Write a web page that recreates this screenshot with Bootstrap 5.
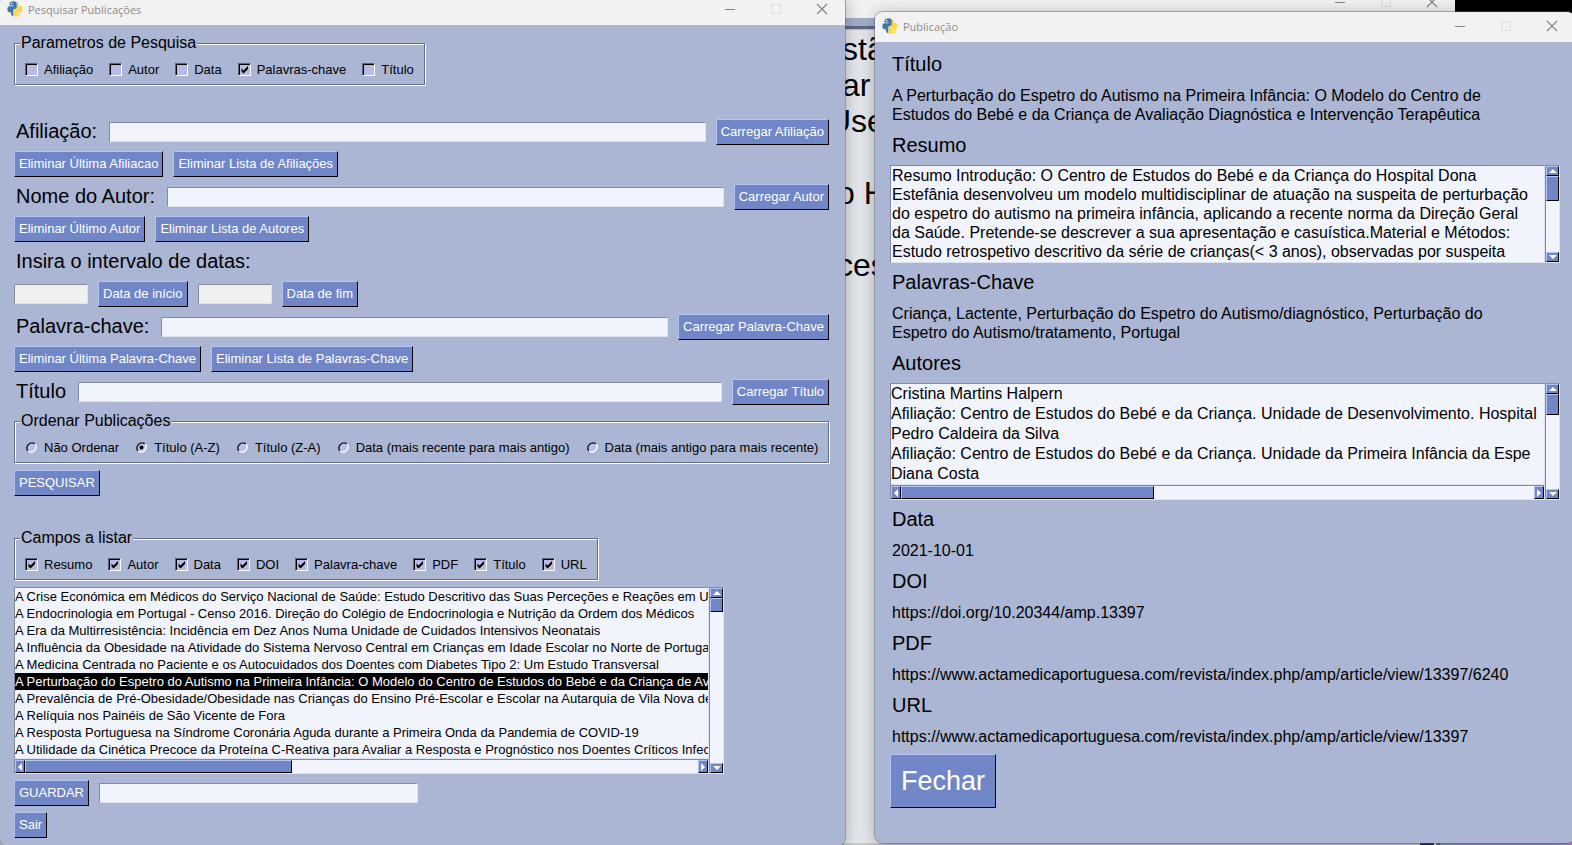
<!DOCTYPE html>
<html lang="pt">
<head>
<meta charset="utf-8">
<meta name="viewport" content="width=device-width, initial-scale=1">
<title>Pesquisar Publicações</title>
<link href="https://cdn.jsdelivr.net/npm/bootstrap@5.3.0/dist/css/bootstrap.min.css" rel="stylesheet">
<style>
:root{--face:#aab6d3;--field:#f1f4fc;--key:#7186c7;--lo:#858b9b;--hi:#dde2ee}
body{font-family:"Liberation Sans",Arial,sans-serif;font-size:13px;line-height:17px;color:#000}
.desktop{min-height:100vh;background:linear-gradient(#000 0 50%,#b08acb 100%)}
/* windows */
.win{position:absolute;background:var(--face);border-radius:8px;overflow:hidden;box-shadow:0 0 0 1px rgba(90,95,110,.45),0 3px 18px rgba(0,0,0,.32)}
.win-main{left:0;top:-5px;width:845px;z-index:2}
.win-pub{left:875px;right:-3px;top:12px;z-index:3}
.win-back{left:0;top:-12px;bottom:-8px;width:1455px;z-index:1;background:#e6eaee;box-shadow:none}
.bar{height:30px;background:#f2f2f2;font-family:"Open Sans","Noto Sans",sans-serif;font-size:11px;color:#8c8c8c;padding:0 0 2px 7px}
.bar svg{display:block}
.bar-title{margin-left:5px}
.ctl{width:46px;height:28px;border:0;background:none;padding:0;color:#858585;display:flex;align-items:center;justify-content:center}
.ctl:disabled{color:#dcdcdc}
.main-body{padding:8px 16px 8px 14px;gap:6px}
.pub-body{padding:9px 15px 35px 15px;gap:6px}
.spacer{height:20px}
.gap-10{gap:10px}
/* text */
.cap{font-size:20px;line-height:27px;font-weight:400;margin:0;padding:0 2px;white-space:nowrap}
.val{font-size:16px;line-height:19px;margin:0;padding:2px}
/* controls */
.key{font-size:13px;line-height:16px;padding:4px;color:#fff;background:var(--key);border:1px solid;border-color:#b3c4f6 #000 #000 #b3c4f6;border-radius:0;white-space:nowrap}
.key:hover{color:#fff;background:#7d91cf}
.key-lg{font-size:27px;line-height:32px;padding:10px}
.entry{height:20px;padding:0 2px;border:1px solid;border-color:var(--lo) var(--hi) var(--hi) var(--lo);background:var(--field);border-radius:0;min-width:0}
.entry-date{width:74px;background:#f0f0f0}
.entry-file{width:319px}
/* etched frame */
.etched{border:1px solid #5f6f89;box-shadow:1px 1px 0 #fff,inset 1px 1px 0 #fff;padding:7px 5px 5px;margin:0 1px 1px 0;width:fit-content}
.etched legend{font-size:16px;line-height:20px;padding:0 1px;margin:0;background:var(--face)}
.opts{gap:16px;padding:0 5px;line-height:19px;white-space:nowrap}
.opts label{display:flex;align-items:center;gap:6px}
.tick,.dot{appearance:none;width:13px;height:13px;margin:0;flex:none}
.tick{border:1px solid;border-color:#5a6378 #fff #fff #5a6378;box-shadow:inset 1px 1px 0 #000;background:#b9bbe6}
.tick:checked{background:#b9bbe6 url("data:image/svg+xml,%3Csvg xmlns='http://www.w3.org/2000/svg' viewBox='0 0 11 11'%3E%3Cpath d='M2.5 4.5v3l2 2 4.500-4.500v-3l-4.500 4.500z'/%3E%3C/svg%3E") center/11px}
.dot{background:url("data:image/svg+xml,%3Csvg xmlns='http://www.w3.org/2000/svg' viewBox='0 0 13 13' fill='none' stroke-width='1.3'%3E%3Ccircle cx='6.500' cy='6.500' r='5' fill='%23bcbfe6'/%3E%3Cpath d='M10 3a5 5 0 0 0-7 7' stroke='%23101020'/%3E%3Cpath d='M10 3a5 5 0 0 1-7 7' stroke='%23fff'/%3E%3C/svg%3E")}
.dot:checked{background-image:url("data:image/svg+xml,%3Csvg xmlns='http://www.w3.org/2000/svg' viewBox='0 0 13 13' fill='none' stroke-width='1.3'%3E%3Ccircle cx='6.500' cy='6.500' r='5' fill='%23bcbfe6'/%3E%3Cpath d='M10 3a5 5 0 0 0-7 7' stroke='%23101020'/%3E%3Cpath d='M10 3a5 5 0 0 1-7 7' stroke='%23fff'/%3E%3Ccircle cx='6.500' cy='6.500' r='2' fill='%23000'/%3E%3C/svg%3E")}
/* list boxes and their scroll bars */
.box-main{width:710px}
.pane{border:1px solid;border-color:var(--lo) var(--hi) var(--hi) var(--lo);background:var(--field);overflow:hidden;white-space:nowrap;border-radius:0}
.pane li{height:17px}
.pane-lg li{font-size:16px;line-height:20px;height:20px}
.pane li[aria-selected=true]{background:#000;color:#fff}
.abstract{display:block;resize:none;font-size:16px;line-height:19px;padding:0 1px 1px;height:98px;color:#000}
.sv,.sh{display:flex;background:var(--field);border:1px solid;border-color:var(--lo) var(--hi) var(--hi) var(--lo);flex:none}
.sv{flex-direction:column;width:15px}
.sh{height:15px}
.sv button,.sh button,.thumb{background:var(--key);border:1px solid;border-color:#b3c4f6 #000 #000 #b3c4f6;padding:0;flex:none;display:flex;align-items:center;justify-content:center}
.sv button{height:10px}
.sh button{width:10px}
.ghost{font-size:32px;line-height:36px;padding-top:1px}
.ghost-head{height:8px;background:#a4afcd}
.ghost-rule{height:4px;background:#5d6b80;border-bottom:1px solid #b9c0ca}
.ghost div{padding-left:837px;height:36px}
.ghost .in-a{padding-left:842px}
.ghost .in-b{padding-left:828px}
.ghost-foot{position:absolute;left:0;right:0;bottom:0;height:10px;background:linear-gradient(90deg,#c9cbcd 0 1420px,#1e2a49 1420px 1434px,#fff 1434px 1436px,#5d6b80 1436px 1440px,#8d9abb 1440px)}
</style>
</head>
<body>
<svg width="0" height="0" class="position-absolute" aria-hidden="true">
<symbol id="py" viewBox="0 0 16 16"><path fill="#3f78a8" d="M6.500.3C4 .3 2.600 1.200 2.600 2.800v1.800h4v.6H2.400C1 5.200.4 6.600.4 8.200s.7 3 2 3H3.800c0 2 .6 3.600 2.600 4.300V10c0-1.400.8-2.200 2-2.200.9 0 1.400-.8 1.400-1.900V2.800C9.800 1.100 8.600.3 6.500.3z"/><path fill="#fbd84b" d="M9.600 15.800c2.500 0 3.800-1 3.800-2.500v-1.700h-4V11h4.300c1.300 0 1.900-1.400 1.900-3s-.7-3-1.900-3h-1.500c0-2-.6-3.600-2.200-4.200V6c0 1.400-.8 2.300-2 2.300-1 0-1.600.8-1.600 2v3c0 1.700 1.200 2.500 3.200 2.500z"/><circle cx="4.700" cy="2.600" r=".8" fill="#fff"/><circle cx="11.400" cy="13.500" r=".8" fill="#fff"/></symbol>
<symbol id="min" viewBox="0 0 12 12"><path d="M1 6.500h10" stroke="currentColor"/></symbol>
<symbol id="max" viewBox="0 0 12 12"><path d="M1.500 1.500h9v9h-9z" fill="none" stroke="currentColor"/></symbol>
<symbol id="cls" viewBox="0 0 12 12"><path d="M1 1l10 10M11 1L1 11" stroke="currentColor" stroke-width="1.200"/></symbol>
<symbol id="up" viewBox="0 0 8 4"><path fill="#fff" d="M0 4l4-4 4 4z"/></symbol>
<symbol id="dn" viewBox="0 0 8 4"><path fill="#fff" d="M0 0l4 4 4-4z"/></symbol>
<symbol id="lt" viewBox="0 0 4 8"><path fill="#fff" d="M4 0L0 4l4 4z"/></symbol>
<symbol id="rt" viewBox="0 0 4 8"><path fill="#fff" d="M0 0l4 4-4 4z"/></symbol>
</svg>
<div class="desktop position-relative overflow-hidden">

<section class="win win-back" aria-hidden="true">
  <div class="bar d-flex justify-content-end">
    <button class="ctl" tabindex="-1"><svg width="12" height="12"><use href="#min"/></svg></button>
    <button class="ctl" disabled><svg width="12" height="12"><use href="#max"/></svg></button>
    <button class="ctl" tabindex="-1"><svg width="12" height="12"><use href="#cls"/></svg></button>
  </div>
  <div class="ghost-head"></div><div class="ghost-rule"></div>
  <div class="ghost"><div class="in-a">stã</div><div class="in-a">ar</div><div class="in-b">Use</div><div></div><div>o H</div><div></div><div>ces</div></div>
  <div class="ghost-foot"></div>
</section>

<main class="win win-main">
  <header class="bar d-flex align-items-center">
    <svg width="16" height="16"><use href="#py"/></svg><span class="bar-title flex-grow-1">Pesquisar Publicações</span>
    <button class="ctl" aria-label="Minimizar"><svg width="12" height="12"><use href="#min"/></svg></button>
    <button class="ctl" aria-label="Maximizar" disabled><svg width="12" height="12"><use href="#max"/></svg></button>
    <button class="ctl" aria-label="Fechar janela"><svg width="12" height="12"><use href="#cls"/></svg></button>
  </header>
  <form class="main-body d-flex flex-column" onsubmit="return false">
    <fieldset class="etched">
      <legend class="float-none w-auto">Parametros de Pesquisa</legend>
      <div class="opts d-flex">
        <label><input class="tick" type="checkbox">Afiliação</label>
        <label><input class="tick" type="checkbox">Autor</label>
        <label><input class="tick" type="checkbox">Data</label>
        <label><input class="tick" type="checkbox" checked>Palavras-chave</label>
        <label><input class="tick" type="checkbox">Título</label>
      </div>
    </fieldset>
    <div class="spacer"></div>
    <div class="d-flex align-items-center gap-10">
      <label class="cap" for="afil">Afiliação:</label><input class="entry flex-grow-1" id="afil" type="text"><button class="btn key">Carregar Afiliação</button>
    </div>
    <div class="d-flex gap-10"><button class="btn key">Eliminar Última Afiliacao</button><button class="btn key">Eliminar Lista de Afiliações</button></div>
    <div class="d-flex align-items-center gap-10">
      <label class="cap" for="autor">Nome do Autor:</label><input class="entry flex-grow-1" id="autor" type="text"><button class="btn key">Carregar Autor</button>
    </div>
    <div class="d-flex gap-10"><button class="btn key">Eliminar Último Autor</button><button class="btn key">Eliminar Lista de Autores</button></div>
    <p class="cap">Insira o intervalo de datas:</p>
    <div class="d-flex align-items-center gap-10">
      <input class="entry entry-date" type="text" aria-label="Data de início"><button class="btn key">Data de início</button>
      <input class="entry entry-date" type="text" aria-label="Data de fim"><button class="btn key">Data de fim</button>
    </div>
    <div class="d-flex align-items-center gap-10">
      <label class="cap" for="chave">Palavra-chave:</label><input class="entry flex-grow-1" id="chave" type="text"><button class="btn key">Carregar Palavra-Chave</button>
    </div>
    <div class="d-flex gap-10"><button class="btn key">Eliminar Última Palavra-Chave</button><button class="btn key">Eliminar Lista de Palavras-Chave</button></div>
    <div class="d-flex align-items-center gap-10">
      <label class="cap" for="titulo">Título</label><input class="entry flex-grow-1" id="titulo" type="text"><button class="btn key">Carregar Título</button>
    </div>
    <fieldset class="etched">
      <legend class="float-none w-auto">Ordenar Publicações</legend>
      <div class="opts d-flex">
        <label><input class="dot" type="radio" name="ordem">Não Ordenar</label>
        <label><input class="dot" type="radio" name="ordem" checked>Título (A-Z)</label>
        <label><input class="dot" type="radio" name="ordem">Título (Z-A)</label>
        <label><input class="dot" type="radio" name="ordem">Data (mais recente para mais antigo)</label>
        <label><input class="dot" type="radio" name="ordem">Data (mais antigo para mais recente)</label>
      </div>
    </fieldset>
    <div class="d-flex"><button class="btn key">PESQUISAR</button></div>
    <div class="spacer"></div>
    <fieldset class="etched">
      <legend class="float-none w-auto">Campos a listar</legend>
      <div class="opts d-flex">
        <label><input class="tick" type="checkbox" checked>Resumo</label>
        <label><input class="tick" type="checkbox" checked>Autor</label>
        <label><input class="tick" type="checkbox" checked>Data</label>
        <label><input class="tick" type="checkbox" checked>DOI</label>
        <label><input class="tick" type="checkbox" checked>Palavra-chave</label>
        <label><input class="tick" type="checkbox" checked>PDF</label>
        <label><input class="tick" type="checkbox" checked>Título</label>
        <label><input class="tick" type="checkbox" checked>URL</label>
      </div>
    </fieldset>
    <div class="box-main d-flex mw-100">
      <div class="flex-grow-1 overflow-hidden">
        <ul class="pane list-unstyled mb-0" role="listbox" aria-label="Publicações">
          <li role="option">A Crise Económica em Médicos do Serviço Nacional de Saúde: Estudo Descritivo das Suas Perceções e Reações em U</li>
          <li role="option">A Endocrinologia em Portugal - Censo 2016. Direção do Colégio de Endocrinologia e Nutrição da Ordem dos Médicos</li>
          <li role="option">A Era da Multirresistência: Incidência em Dez Anos Numa Unidade de Cuidados Intensivos Neonatais</li>
          <li role="option">A Influência da Obesidade na Atividade do Sistema Nervoso Central em Crianças em Idade Escolar no Norte de Portugal</li>
          <li role="option">A Medicina Centrada no Paciente e os Autocuidados dos Doentes com Diabetes Tipo 2: Um Estudo Transversal</li>
          <li role="option" aria-selected="true">A Perturbação do Espetro do Autismo na Primeira Infância: O Modelo do Centro de Estudos do Bebé e da Criança de Av</li>
          <li role="option">A Prevalência de Pré-Obesidade/Obesidade nas Crianças do Ensino Pré-Escolar e Escolar na Autarquia de Vila Nova de</li>
          <li role="option">A Relíquia nos Painéis de São Vicente de Fora</li>
          <li role="option">A Resposta Portuguesa na Síndrome Coronária Aguda durante a Primeira Onda da Pandemia de COVID-19</li>
          <li role="option">A Utilidade da Cinética Precoce da Proteína C-Reativa para Avaliar a Resposta e Prognóstico nos Doentes Críticos Infec</li>
        </ul>
        <div class="sh"><button type="button" aria-label="Esquerda"><svg width="4" height="8"><use href="#lt"/></svg></button><div class="thumb" style="width:267px"></div><button type="button" class="ms-auto" aria-label="Direita"><svg width="4" height="8"><use href="#rt"/></svg></button></div>
      </div>
      <div class="sv"><button type="button" aria-label="Cima"><svg width="8" height="4"><use href="#up"/></svg></button><div class="thumb" style="height:14px"></div><button type="button" class="mt-auto" aria-label="Baixo"><svg width="8" height="4"><use href="#dn"/></svg></button></div>
    </div>
    <div class="d-flex align-items-center gap-10"><button class="btn key">GUARDAR</button><input class="entry entry-file" type="text" aria-label="Nome do ficheiro"></div>
    <div class="d-flex"><button class="btn key">Sair</button></div>
  </form>
</main>

<section class="win win-pub">
  <header class="bar d-flex align-items-center">
    <svg width="16" height="16"><use href="#py"/></svg><span class="bar-title flex-grow-1">Publicação</span>
    <button class="ctl" aria-label="Minimizar"><svg width="12" height="12"><use href="#min"/></svg></button>
    <button class="ctl" aria-label="Maximizar" disabled><svg width="12" height="12"><use href="#max"/></svg></button>
    <button class="ctl" aria-label="Fechar janela"><svg width="12" height="12"><use href="#cls"/></svg></button>
  </header>
  <div class="pub-body d-flex flex-column">
    <h2 class="cap">Título</h2>
    <p class="val">A Perturbação do Espetro do Autismo na Primeira Infância: O Modelo do Centro de<br>Estudos do Bebé e da Criança de Avaliação Diagnóstica e Intervenção Terapêutica</p>
    <label class="cap" for="resumo">Resumo</label>
    <div class="d-flex">
      <textarea class="pane abstract flex-grow-1" id="resumo">Resumo Introdução: O Centro de Estudos do Bebé e da Criança do Hospital Dona
Estefânia desenvolveu um modelo multidisciplinar de atuação na suspeita de perturbação
do espetro do autismo na primeira infância, aplicando a recente norma da Direção Geral
da Saúde. Pretende-se descrever a sua apresentação e casuística.Material e Métodos:
Estudo retrospetivo descritivo da série de crianças(&lt; 3 anos), observadas por suspeita</textarea>
      <div class="sv"><button aria-label="Cima"><svg width="8" height="4"><use href="#up"/></svg></button><div class="thumb" style="height:25px"></div><button class="mt-auto" aria-label="Baixo"><svg width="8" height="4"><use href="#dn"/></svg></button></div>
    </div>
    <h2 class="cap">Palavras-Chave</h2>
    <p class="val">Criança, Lactente, Perturbação do Espetro do Autismo/diagnóstico, Perturbação do<br>Espetro do Autismo/tratamento, Portugal</p>
    <h2 class="cap">Autores</h2>
    <div class="d-flex">
      <div class="flex-grow-1 overflow-hidden">
        <ul class="pane pane-lg list-unstyled mb-0" role="listbox" aria-label="Autores">
          <li role="option">Cristina Martins Halpern</li>
          <li role="option">Afiliação: Centro de Estudos do Bebé e da Criança. Unidade de Desenvolvimento. Hospital</li>
          <li role="option">Pedro Caldeira da Silva</li>
          <li role="option">Afiliação: Centro de Estudos do Bebé e da Criança. Unidade da Primeira Infância da Espe</li>
          <li role="option">Diana Costa</li>
        </ul>
        <div class="sh"><button aria-label="Esquerda"><svg width="4" height="8"><use href="#lt"/></svg></button><div class="thumb" style="width:253px"></div><button class="ms-auto" aria-label="Direita"><svg width="4" height="8"><use href="#rt"/></svg></button></div>
      </div>
      <div class="sv"><button aria-label="Cima"><svg width="8" height="4"><use href="#up"/></svg></button><div class="thumb" style="height:21px"></div><button class="mt-auto" aria-label="Baixo"><svg width="8" height="4"><use href="#dn"/></svg></button></div>
    </div>
    <h2 class="cap">Data</h2>
    <p class="val">2021-10-01</p>
    <h2 class="cap">DOI</h2>
    <p class="val">https://doi.org/10.20344/amp.13397</p>
    <h2 class="cap">PDF</h2>
    <p class="val">https://www.actamedicaportuguesa.com/revista/index.php/amp/article/view/13397/6240</p>
    <h2 class="cap">URL</h2>
    <p class="val">https://www.actamedicaportuguesa.com/revista/index.php/amp/article/view/13397</p>
    <div class="d-flex"><button class="btn key key-lg">Fechar</button></div>
  </div>
</section>
</div>
<script src="https://cdn.jsdelivr.net/npm/bootstrap@5.3.0/dist/js/bootstrap.bundle.min.js"></script>
</body>
</html>
